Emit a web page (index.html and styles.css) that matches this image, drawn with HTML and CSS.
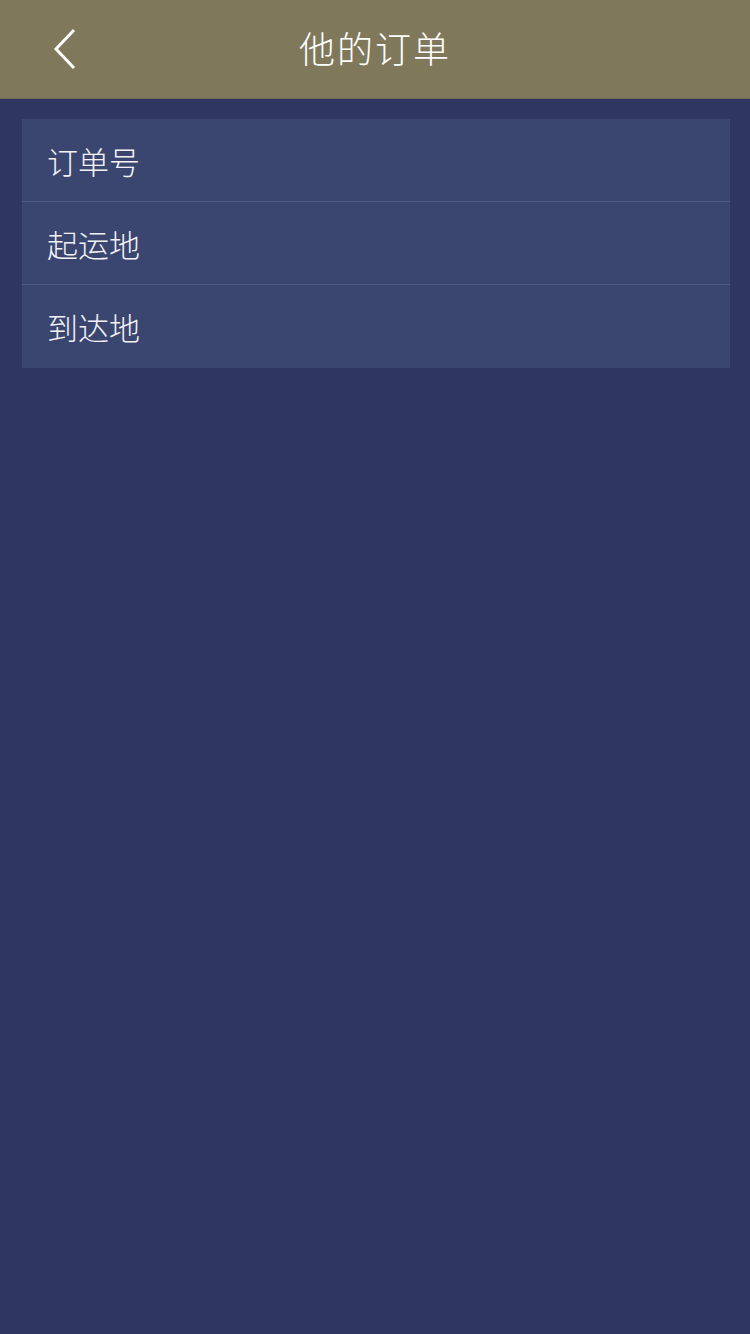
FILE: index.html
```html
<!DOCTYPE html>
<html lang="zh-CN">
<head>
<meta charset="utf-8">
<link rel="stylesheet" href="styles.css">
</head>
<body>
<div class="page">
  <header class="topbar">
    <div class="back">
      <svg width="26" height="42" viewBox="0 0 26 42"><polyline points="22,2 4,21 22,40" fill="none" stroke="#ffffff" stroke-width="3"/></svg>
    </div>
    <h1 class="title">他的订单</h1>
  </header>
  <main class="content">
    <ul class="list">
      <li class="row">订单号</li>
      <li class="row">起运地</li>
      <li class="row">到达地</li>
    </ul>
  </main>
</div>
</body>
</html>
```
FILE: styles.css
```css
html, body {
  margin: 0;
  padding: 0;
  background: #2f365f;
}
.page {
  width: 750px;
  height: 1334px;
  background: #2f365f;
  font-family: "Noto Sans CJK SC", "Noto Sans", sans-serif;
  font-weight: 300;
  color: #ffffff;
  display: flex;
  flex-direction: column;
}
.topbar {
  height: 98px;
  background: #80785b;
  display: flex;
  align-items: center;
  justify-content: center;
  position: relative;
  border-bottom: 1px solid #6e6a55;
}
.back {
  position: absolute;
  left: 52px;
  top: 28px;
  width: 26px;
  height: 42px;
}
.back svg { display: block; }
.title {
  margin: 0 0 4px 0;
  font-size: 36px;
  font-weight: 300;
  letter-spacing: 2px;
  line-height: 1;
}
.content {
  padding: 20px 20px 0 22px;
}
.list {
  list-style: none;
  margin: 0;
  padding: 0 0 1px 0;
  background: #3a4670;
}
.row {
  height: 82px;
  display: flex;
  align-items: center;
  padding-left: 25px;
  font-size: 31px;
  line-height: 1;
  color: #f2f2f5;
}
.row + .row {
  border-top: 1px solid #4f5a85;
}
```
